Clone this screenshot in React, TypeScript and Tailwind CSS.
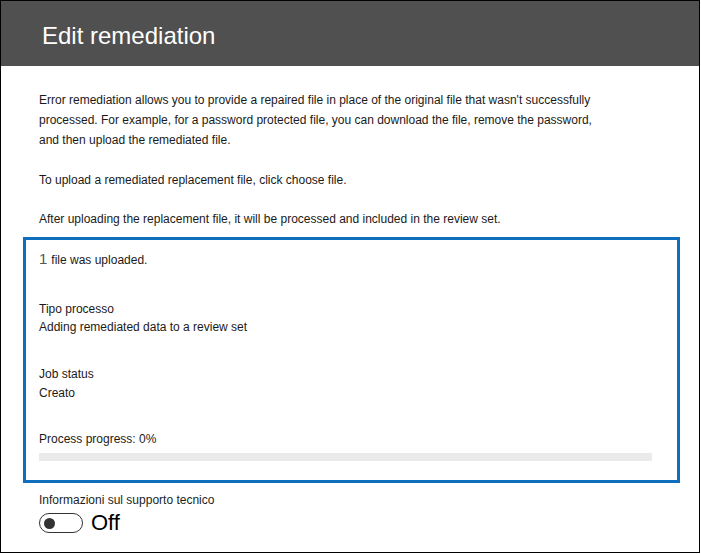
import React from 'react';

export default function App() {
  return (
    <div className="w-[701px] h-[554px] bg-white">
      <div className="w-[700px] h-[553px] border border-black flex flex-col font-['Liberation_Sans',Arial,sans-serif] text-[#1b1a19]">
        <div className="h-[65px] bg-[#505050] flex items-center pl-[41px]">
          <h1 className="text-[24px] text-white leading-none mt-[5px]">Edit remediation</h1>
        </div>

        <div className="pt-[24px] pl-[38px] text-[12px] leading-[20px]">
          <p>
            Error remediation allows you to provide a repaired file in place of the original file that wasn't successfully
            <br />
            processed. For example, for a password protected file, you can download the file, remove the password,
            <br />
            and then upload the remediated file.
          </p>
          <p className="mt-[20px]">To upload a remediated replacement file, click choose file.</p>
          <p className="mt-[19px]">After uploading the replacement file, it will be processed and included in the review set.</p>
        </div>

        <div className="ml-[22px] mt-[8px] w-[657px] h-[246px] border-[3px] border-[#106ebe] pl-[13px] pt-[9px] text-[12px]">
          <div className="flex items-baseline h-[20px] leading-[20px]">
            <span className="text-[15px] text-[#555] mr-[4px]">1</span>
            <span>file was uploaded.</span>
          </div>
          <div className="mt-[31px] leading-[18px]">Tipo processo</div>
          <div className="leading-[18px]">Adding remediated data to a review set</div>
          <div className="mt-[29px] leading-[18px]">Job status</div>
          <div className="mt-[1px] leading-[18px]">Creato</div>
          <div className="mt-[28px] leading-[18px]">Process progress: 0%</div>
          <div className="mt-[5px] w-[613px] h-[8px] bg-[#eaeaea]" />
        </div>

        <div className="pl-[38px] mt-[8px]">
          <div className="text-[12px] leading-[18px] text-[#201f1e]">Informazioni sul supporto tecnico</div>
          <div className="mt-[2px] flex items-center gap-[8px]">
            <div className="w-[44px] h-[20px] rounded-full border border-[#333] flex items-center pl-[4px]">
              <div className="w-[11px] h-[11px] rounded-full bg-[#333]" />
            </div>
            <span className="text-[22px] leading-[24px] text-black">Off</span>
          </div>
        </div>
      </div>
    </div>
  );
}
